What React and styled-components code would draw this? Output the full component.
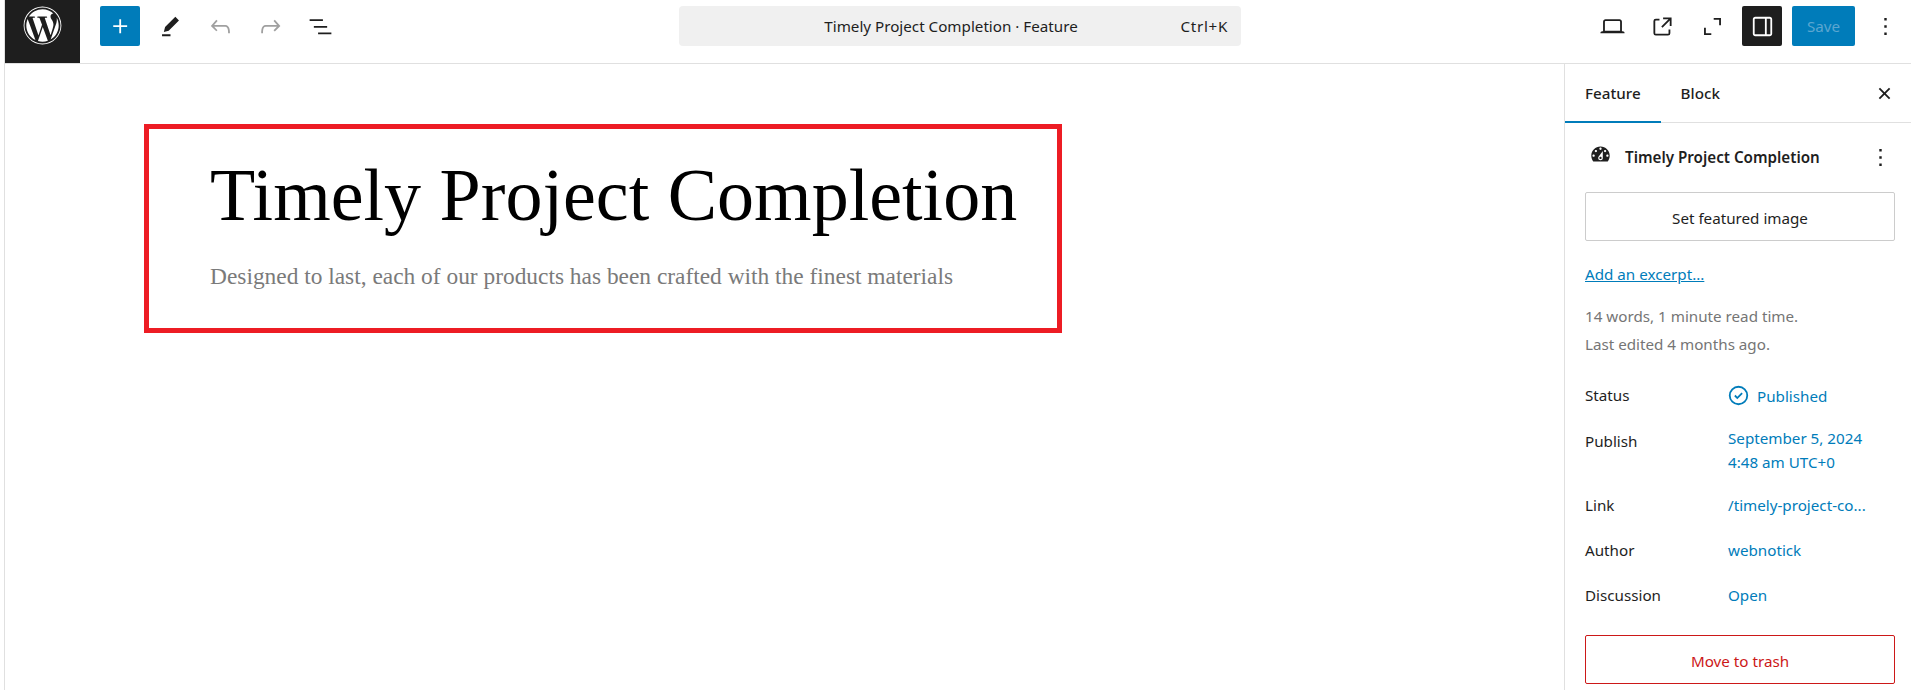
import React from 'react';
import styled, { createGlobalStyle } from 'styled-components';
import { FaWordpress } from 'react-icons/fa';

const GlobalStyle = createGlobalStyle`
  html, body {
    margin: 0;
    padding: 0;
    background: #fff;
    overflow: hidden;
  }
  body {
    font-family: "Noto Sans", "Open Sans", sans-serif;
    font-size: 15.2px;
    color: #1e1e1e;
  }
`;

const Shell = styled.div`
  display: flex;
  flex-direction: column;
  height: 690px;
  margin-left: 4px;
  border-left: 1px solid #e0e0e0;
  overflow: hidden;
`;

const Header = styled.header`
  display: flex;
  align-items: center;
  flex: none;
  height: 64px;
  box-sizing: border-box;
  border-bottom: 1px solid #e0e0e0;
`;

const LogoBox = styled.div`
  display: flex;
  align-items: center;
  justify-content: center;
  flex: none;
  box-sizing: border-box;
  width: 75px;
  height: 63px;
  padding-bottom: 12px;
  background: #1e1e1e;
  color: #fff;
  font-size: 39px;
`;

const ToolGroup = styled.div`
  display: flex;
  align-items: center;
  flex: none;
  gap: 10px;
  margin-left: ${(p) => p.$left || 0}px;
  padding-bottom: 11px;
`;

const IconButton = styled.button`
  display: flex;
  align-items: center;
  justify-content: center;
  flex: none;
  width: 40px;
  height: 40px;
  padding: 0;
  border: 0;
  border-radius: 2px;
  background: ${(p) => (p.$variant === 'primary' ? '#007cba' : p.$variant === 'dark' ? '#1e1e1e' : 'transparent')};
  color: ${(p) => (p.$variant === 'primary' || p.$variant === 'dark' ? '#fff' : p.$muted ? '#a0a0a0' : '#1e1e1e')};
  cursor: pointer;

  svg {
    fill: currentColor;
  }
`;

const CommandBar = styled.div`
  display: flex;
  align-items: center;
  justify-content: center;
  flex: none;
  position: relative;
  box-sizing: border-box;
  width: 562px;
  height: 40px;
  margin-left: 339px;
  margin-bottom: 11px;
  padding-right: 18px;
  border-radius: 4px;
  background: #f0f0f0;
`;

const Shortcut = styled.span`
  position: absolute;
  right: 13px;
  top: 50%;
  transform: translateY(-50%);
  letter-spacing: 0.7px;
`;

const SaveButton = styled.button`
  flex: none;
  width: 63px;
  height: 40px;
  padding: 0;
  border: 0;
  border-radius: 2px;
  background: #007cba;
  color: #5ba6d0;
  font: inherit;
`;

const Body = styled.div`
  display: flex;
  flex: 1;
  min-height: 0;
`;

const Canvas = styled.main`
  flex: 1;
  padding: 60px 0 0 139px;
`;

const FeatureBox = styled.section`
  box-sizing: border-box;
  width: 918px;
  height: 209px;
  padding: 23px 0 0 61px;
  border: 5px solid #ed1c24;
`;

const Title = styled.h1`
  margin: 0;
  font-family: "Liberation Serif", serif;
  font-size: 74px;
  font-weight: 400;
  line-height: 86px;
  color: #000;
  white-space: nowrap;
`;

const Subtitle = styled.p`
  margin: 23px 0 0;
  font-family: "Liberation Serif", serif;
  font-size: 23.4px;
  line-height: 30px;
  color: #7a7a7a;
  white-space: nowrap;
`;

const Sidebar = styled.aside`
  flex: none;
  box-sizing: border-box;
  width: 347px;
  border-left: 1px solid #e0e0e0;
`;

const Tabs = styled.div`
  display: flex;
  align-items: center;
  height: 59px;
  box-sizing: border-box;
  border-bottom: 1px solid #e0e0e0;
`;

const Tab = styled.div`
  display: flex;
  align-items: center;
  align-self: stretch;
  padding: 0 20px 2px;
  font-weight: 500;
  box-shadow: ${(p) => (p.$active ? 'inset 0 -2px 0 #007cba' : 'none')};
  margin-bottom: -1px;
`;

const TabClose = styled.span`
  display: flex;
  margin-left: auto;
  margin-right: 12px;
  svg {
    fill: #1e1e1e;
  }
`;

const Panel = styled.div`
  padding: 16px 16px 0 20px;
`;

const PostRow = styled.div`
  display: flex;
  align-items: center;
  height: 36px;
  font-weight: 600;
`;

const PostIcon = styled.svg`
  flex: none;
  width: 23px;
  height: 23px;
  margin: -5px 13px 0 4px;
  fill: #1e1e1e;
`;

const MoreWrap = styled.span`
  display: flex;
  margin-left: auto;
  svg {
    fill: #1e1e1e;
  }
`;

const WideButton = styled.button`
  display: block;
  box-sizing: border-box;
  width: 310px;
  height: 49px;
  margin-top: ${(p) => p.$top}px;
  padding: 2px 0 0;
  border: 1px solid ${(p) => (p.$danger ? '#cc1818' : '#ccc')};
  border-radius: 2px;
  background: #fff;
  color: ${(p) => (p.$danger ? '#cc1818' : '#1e1e1e')};
  font: inherit;
`;

const ExcerptLink = styled.a`
  display: block;
  margin-top: 21px;
  line-height: 24px;
  color: #007cba;
  text-decoration: underline;
`;

const Meta = styled.div`
  margin-top: 16px;
  line-height: 28px;
  color: #757575;
`;

const Rows = styled.div`
  display: flex;
  flex-direction: column;
  gap: 17px;
  margin-top: 23px;
`;

const Row = styled.div`
  display: grid;
  grid-template-columns: 143px 1fr;
  line-height: 28px;
`;

const Value = styled.div`
  display: ${(p) => (p.$stack ? 'block' : 'flex')};
  align-items: center;
  color: #007cba;
  line-height: ${(p) => (p.$stack ? '23.5px' : '28px')};
  svg {
    flex: none;
    margin: 0 4px 0 -4px;
    fill: #007cba;
  }
`;

const Icon = ({ d, size = 29 }) => (
  <svg width={size} height={size} viewBox="0 0 24 24" aria-hidden="true">
    <path fillRule="evenodd" d={d} />
  </svg>
);

const paths = {
  plus: 'M11 12.5V17.5H12.5V12.5H17.5V11H12.5V6H11V11H6V12.5H11Z',
  pencil: 'm19 7-3-3-8.5 8.5-1 4 4-1L19 7Zm-7 11.5H5V20h7v-1.5Z',
  undo: 'M18.3 11.7c-.6-.6-1.4-.9-2.3-.9H6.7l2.9-3.3-1.1-1-4.5 5L8.5 16l1-1-2.7-2.7H16c.5 0 .9.2 1.3.5 1 1 1 3.4 1 4.5v.3h1.5v-.2c0-1.5 0-4.3-1.5-5.7z',
  redo: 'M15.6 6.5l-1.1 1 2.9 3.3H8c-.9 0-1.7.3-2.3.9-1.4 1.5-1.4 4.2-1.4 5.6v.2h1.5v-.3c0-1.1 0-3.5 1-4.5.3-.3.7-.5 1.3-.5h9.2L14.5 15l1.1 1.1 4.6-4.6-4.6-5z',
  list: 'M3 6h11v1.5H3V6Zm3.5 5.5h11V13h-11v-1.5ZM21 17H10v1.5h11V17Z',
  desktop: 'M20.5 16h-.7V8c0-1.1-.9-2-2-2H6.2c-1.1 0-2 .9-2 2v8h-.7c-.8 0-1.5.7-1.5 1.5h20c0-.8-.7-1.5-1.5-1.5zM5.7 8c0-.3.2-.5.5-.5h11.6c.3 0 .5.2.5.5v7.6H5.7V8z',
  external: 'M19.5 4.5h-7V6h4.44l-5.97 5.97 1.06 1.06L18 7.06v4.44h1.5v-7Zm-13 1a2 2 0 0 0-2 2v10a2 2 0 0 0 2 2h10a2 2 0 0 0 2-2v-3H17v3a.5.5 0 0 1-.5.5h-10a.5.5 0 0 1-.5-.5v-10a.5.5 0 0 1 .5-.5h3V5.5h-3Z',
  fullscreen: 'M13 5h6v6h-1.5V6.5H13V5ZM5 13h1.5v4.5H11V19H5v-6Z',
  sidebar: 'M18 4H6c-1.1 0-2 .9-2 2v12c0 1.1.9 2 2 2h12c1.1 0 2-.9 2-2V6c0-1.1-.9-2-2-2zm-4 14.5H6c-.3 0-.5-.2-.5-.5V6c0-.3.2-.5.5-.5h8v13zm4.5-.5c0 .3-.2.5-.5.5h-2.5v-13H18c.3 0 .5.2.5.5v12z',
  more: 'M13 19h-2v-2h2v2zm0-6h-2v-2h2v2zm0-6h-2V5h2v2z',
  close: 'M12 13.06l3.712 3.713 1.061-1.06L13.061 12l3.712-3.712-1.06-1.06L12 10.938 8.288 7.227l-1.061 1.06L10.939 12l-3.712 3.712 1.06 1.061L12 13.061z',
  published: 'M12 18.5a6.5 6.5 0 1 1 0-13 6.5 6.5 0 0 1 0 13ZM4 12a8 8 0 1 1 16 0 8 8 0 0 1-16 0Zm11.53-1.47-1.06-1.06L11 12.94l-1.47-1.47-1.06 1.06L11 15.06l4.53-4.53Z',
};

const gauge =
  'M3.76 16h12.48c1.1-1.37 1.76-3.11 1.76-5 0-4.42-3.58-8-8-8s-8 3.58-8 8c0 1.89.66 3.63 1.76 5zM10 4c.55 0 1 .45 1 1s-.45 1-1 1-1-.45-1-1 .45-1 1-1zM6 6c.55 0 1 .45 1 1s-.45 1-1 1-1-.45-1-1 .45-1 1-1zm8 0c.55 0 1 .45 1 1s-.45 1-1 1-1-.45-1-1 .45-1 1-1zm-5.37 5.55L12 7v6c0 1.1-.9 2-2 2s-2-.9-2-2c0-.57.24-1.08.63-1.45zM4 10c.55 0 1 .45 1 1s-.45 1-1 1-1-.45-1-1 .45-1 1-1zm12 0c.55 0 1 .45 1 1s-.45 1-1 1-1-.45-1-1 .45-1 1-1zm-5 3c0-.55-.45-1-1-1s-1 .45-1 1 .45 1 1 1 1-.45 1-1z';

const App = () => (
  <>
    <GlobalStyle />
    <Shell>
      <Header>
        <LogoBox>
          <FaWordpress />
        </LogoBox>
        <ToolGroup $left={20}>
          <IconButton $variant="primary"><Icon d={paths.plus} /></IconButton>
          <IconButton><Icon d={paths.pencil} /></IconButton>
          <IconButton $muted><Icon d={paths.undo} /></IconButton>
          <IconButton $muted><Icon d={paths.redo} /></IconButton>
          <IconButton><Icon d={paths.list} /></IconButton>
        </ToolGroup>
        <CommandBar>
          Timely Project Completion · Feature
          <Shortcut>Ctrl+K</Shortcut>
        </CommandBar>
        <ToolGroup $left={351}>
          <IconButton><Icon d={paths.desktop} /></IconButton>
          <IconButton><Icon d={paths.external} /></IconButton>
          <IconButton><Icon d={paths.fullscreen} /></IconButton>
          <IconButton $variant="dark"><Icon d={paths.sidebar} /></IconButton>
          <SaveButton>Save</SaveButton>
          <IconButton><Icon d={paths.more} /></IconButton>
        </ToolGroup>
      </Header>
      <Body>
        <Canvas>
          <FeatureBox>
            <Title>Timely Project Completion</Title>
            <Subtitle>Designed to last, each of our products has been crafted with the finest materials</Subtitle>
          </FeatureBox>
        </Canvas>
        <Sidebar>
          <Tabs>
            <Tab $active>Feature</Tab>
            <Tab>Block</Tab>
            <TabClose><Icon d={paths.close} /></TabClose>
          </Tabs>
          <Panel>
            <PostRow>
              <PostIcon viewBox="0 0 20 20" aria-hidden="true">
                <path fillRule="evenodd" d={gauge} />
              </PostIcon>
              Timely Project Completion
              <MoreWrap><Icon d={paths.more} /></MoreWrap>
            </PostRow>
            <WideButton $top={17}>Set featured image</WideButton>
            <ExcerptLink href="#excerpt">Add an excerpt...</ExcerptLink>
            <Meta>
              14 words, 1 minute read time.
              <br />
              Last edited 4 months ago.
            </Meta>
            <Rows>
              <Row>
                <span>Status</span>
                <Value><Icon d={paths.published} />Published</Value>
              </Row>
              <Row>
                <span>Publish</span>
                <Value $stack>September 5, 2024<br />4:48 am UTC+0</Value>
              </Row>
              <Row>
                <span>Link</span>
                <Value>/timely-project-co...</Value>
              </Row>
              <Row>
                <span>Author</span>
                <Value>webnotick</Value>
              </Row>
              <Row>
                <span>Discussion</span>
                <Value>Open</Value>
              </Row>
            </Rows>
            <WideButton $top={26} $danger>Move to trash</WideButton>
          </Panel>
        </Sidebar>
      </Body>
    </Shell>
  </>
);

export default App;
